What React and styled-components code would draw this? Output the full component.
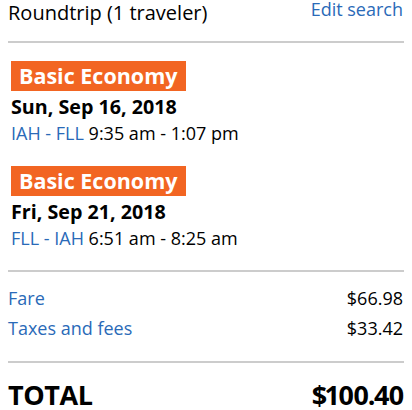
import React from "react";
import styled, { createGlobalStyle } from "styled-components";

const Global = createGlobalStyle`
  html, body { margin: 0; padding: 0; background: #fff; }
  body { font-family: "Open Sans", "Noto Sans", Arial, sans-serif; color: #000; }
`;

const BLUE = "#2a6ab8";

const Page = styled.div`
  padding: 0 8px;
  width: 396px;
`;

const Header = styled.div`
  display: flex;
  justify-content: space-between;
  align-items: flex-start;
  height: 41px;
`;

const Title = styled.div`
  font-size: 20px;
  line-height: 26px;
`;

const EditLink = styled.a`
  font-size: 18px;
  line-height: 20px;
  margin-top: -1px;
  color: ${BLUE};
  text-decoration: none;
  margin-right: 1px;
`;

const Divider = styled.hr`
  border: 0;
  height: 2px;
  background: #cccccc;
  margin: 0;
`;

const Legs = styled.div`
  padding: 18px 0 20px 3px;
  display: flex;
  flex-direction: column;
  gap: 21px;
`;

const Leg = styled.div`
  display: flex;
  flex-direction: column;
  align-items: flex-start;
`;

const Badge = styled.div`
  background: #f26522;
  color: #fff;
  font-weight: 700;
  font-size: 21.5px;
  line-height: 30px;
  height: 30px;
  padding: 0 8px;
  margin-bottom: 3px;
`;

const DateLine = styled.div`
  font-weight: 700;
  font-size: 19.7px;
  line-height: 26px;
`;

const Route = styled.div`
  font-size: 18px;
  line-height: 23px;
  margin-top: 2px;
`;

const Airports = styled.span`
  color: ${BLUE};
`;

const Prices = styled.div`
  padding: 11px 0 18px;
`;

const PriceRow = styled.div`
  display: flex;
  justify-content: space-between;
  font-size: 18px;
  line-height: 30px;
  padding-right: 1px;
`;

const PriceLabel = styled.span`
  color: ${BLUE};
`;

const TotalRow = styled.div`
  display: flex;
  justify-content: space-between;
  font-weight: 700;
  font-size: 27px;
  letter-spacing: -0.4px;
  padding-top: 13px;
  padding-right: 1px;
`;

const TotalAmount = styled.span`
  font-variant-numeric: proportional-nums;
  letter-spacing: -1.5px;
`;

const legs = [
  { date: "Sun, Sep 16, 2018", route: "IAH - FLL", time: "9:35 am - 1:07 pm" },
  { date: "Fri, Sep 21, 2018", route: "FLL - IAH", time: "6:51 am - 8:25 am" },
];

export default function App() {
  return (
    <Page>
      <Global />
      <Header>
        <Title>Roundtrip (1 traveler)</Title>
        <EditLink href="#">Edit search</EditLink>
      </Header>
      <Divider />
      <Legs>
        {legs.map((l) => (
          <Leg key={l.date}>
            <Badge>Basic Economy</Badge>
            <DateLine>{l.date}</DateLine>
            <Route>
              <Airports>{l.route}</Airports> {l.time}
            </Route>
          </Leg>
        ))}
      </Legs>
      <Divider />
      <Prices>
        <PriceRow>
          <PriceLabel>Fare</PriceLabel>
          <span>$66.98</span>
        </PriceRow>
        <PriceRow>
          <PriceLabel>Taxes and fees</PriceLabel>
          <span>$33.42</span>
        </PriceRow>
      </Prices>
      <Divider />
      <TotalRow>
        <span>TOTAL</span>
        <TotalAmount>$100.40</TotalAmount>
      </TotalRow>
    </Page>
  );
}
